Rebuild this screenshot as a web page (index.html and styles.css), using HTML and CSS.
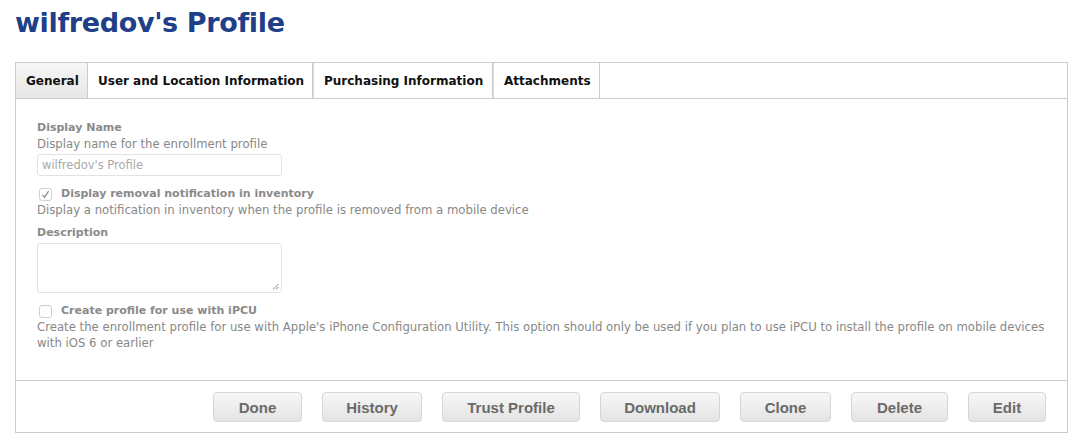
FILE: index.html
```html
<!DOCTYPE html>
<html>
<head>
<meta charset="utf-8">
<link rel="stylesheet" href="styles.css">
</head>
<body>
<h1 class="title">wilfredov's Profile</h1>
<div class="panel">
  <div class="tabs">
    <div class="tab active">General</div>
    <div class="tab">User and Location Information</div>
    <div class="tab thick">Purchasing Information</div>
    <div class="tab thick">Attachments</div>
    <div class="tab-fill"></div>
  </div>
  <div class="content">
    <div class="field">
      <div class="label">Display Name</div>
      <div class="help">Display name for the enrollment profile</div>
      <div class="input">wilfredov's Profile</div>
    </div>
    <div class="field">
      <div class="check-row">
        <span class="checkbox">
          <svg width="9" height="9" viewBox="0 0 9 9"><path d="M1.5 4.8 L3.6 7.2 L7.6 1.2" fill="none" stroke="#8a8a8a" stroke-width="1.2"/></svg>
        </span>
        <span class="label">Display removal notification in inventory</span>
      </div>
      <div class="help">Display a notification in inventory when the profile is removed from a mobile device</div>
    </div>
    <div class="field field-desc">
      <div class="label">Description</div>
      <div class="textarea">
        <svg class="grip" width="7" height="7" viewBox="0 0 7 7"><path d="M6.5 1 L1 6.5 M6.5 4 L4 6.5" stroke="#777" stroke-width="0.9"/></svg>
      </div>
    </div>
    <div class="field">
      <div class="check-row">
        <span class="checkbox"></span>
        <span class="label">Create profile for use with iPCU</span>
      </div>
      <div class="help">Create the enrollment profile for use with Apple's iPhone Configuration Utility. This option should only be used if you plan to use iPCU to install the profile on mobile devices with iOS 6 or earlier</div>
    </div>
  </div>
  <div class="footer">
    <button class="btn w-done">Done</button>
    <button class="btn w-history">History</button>
    <button class="btn w-trust">Trust Profile</button>
    <button class="btn w-download">Download</button>
    <button class="btn w-clone">Clone</button>
    <button class="btn w-delete">Delete</button>
    <button class="btn w-edit">Edit</button>
  </div>
</div>
</body>
</html>
```
FILE: styles.css
```css
html, body {
  margin: 0;
  padding: 0;
  background: #ffffff;
}
body {
  padding: 0 16px 0 15px;
  font-family: "DejaVu Sans", Verdana, sans-serif;
}
.title {
  margin: 0;
  padding: 5px 0 0 0;
  height: 62px;
  box-sizing: border-box;
  font-size: 27px;
  font-weight: bold;
  color: #1f4088;
  letter-spacing: -0.35px;
  line-height: 36px;
}
.panel {
  border: 1px solid #cccccc;
  width: 1053px;
  box-sizing: border-box;
}
.tabs {
  display: flex;
  height: 36px;
  border-bottom: 1px solid #cccccc;
  box-sizing: border-box;
}
.tab {
  display: flex;
  align-items: center;
  padding: 0 0 0 10px;
  font-size: 12px;
  font-weight: bold;
  color: #111;
  white-space: nowrap;
  border-right: 1px solid #cccccc;
  box-sizing: border-box;
  flex: none;
}
.tab.thick {
  border-left: 1px solid #d8d8d8;
}
.tab.active {
  background: linear-gradient(#f6f6f6, #e6e6e6);
}
.tab:nth-child(1) { width: 72px; }
.tab:nth-child(2) { width: 225px; }
.tab:nth-child(3) { width: 180px; }
.tab:nth-child(4) { width: 107px; }
.tab-fill { flex: 1; }
.content {
  padding: 21px 21px 23px 21px;
  display: flex;
  flex-direction: column;
  gap: 10px;
  height: 282px;
  box-sizing: border-box;
  border-bottom: 1px solid #cccccc;
}
.field-desc {
  margin-top: -3px;
}
.label {
  font-size: 11px;
  font-weight: bold;
  color: #8a8a8a;
  line-height: 16px;
}
.help {
  font-size: 11.7px;
  color: #888888;
  line-height: 16px;
}
.input {
  margin-top: 2px;
  width: 245px;
  height: 22px;
  box-sizing: border-box;
  border: 1px solid #e2e2e2;
  border-radius: 3px;
  font-size: 11.5px;
  color: #aaaaaa;
  padding: 3px 4px;
  line-height: 14px;
}
.check-row {
  display: flex;
  align-items: center;
  gap: 9px;
  padding-left: 2px;
}
.checkbox {
  width: 13px;
  height: 13px;
  box-sizing: border-box;
  border: 1px solid #cfcfcf;
  border-radius: 3px;
  display: flex;
  align-items: center;
  justify-content: center;
  background: #fff;
}
.textarea {
  margin-top: 2px;
  width: 245px;
  height: 50px;
  box-sizing: border-box;
  border: 1px solid #e2e2e2;
  border-radius: 3px;
  position: relative;
}
.grip {
  position: absolute;
  right: 2px;
  bottom: 2px;
}
.footer {
  display: flex;
  justify-content: flex-end;
  align-items: center;
  gap: 20px;
  padding: 11px 21px 10px 0;
  height: 51px;
  box-sizing: border-box;
}
.btn {
  height: 30px;
  border: 1px solid #d6d6d6;
  border-radius: 4px;
  background: linear-gradient(#f7f7f7, #e4e4e4);
  font-family: "Liberation Sans", Arial, sans-serif;
  font-weight: bold;
  font-size: 15px;
  color: #6a6a6a;
  padding: 0;
}
.w-done { width: 89px; }
.w-history { width: 100px; }
.w-trust { width: 138px; }
.w-download { width: 120px; }
.w-clone { width: 91px; }
.w-delete { width: 97px; }
.w-edit { width: 78px; }
```
